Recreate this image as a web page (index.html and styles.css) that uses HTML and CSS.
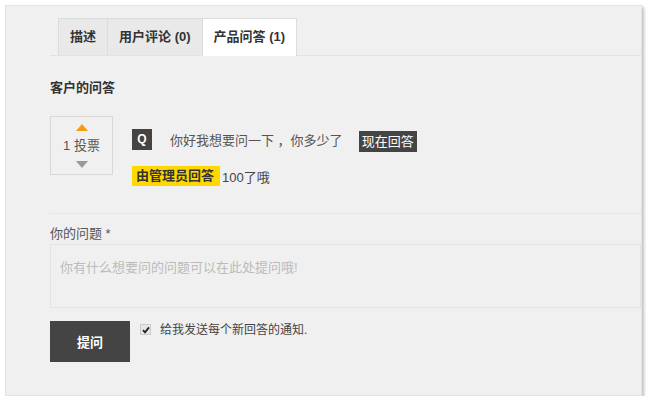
FILE: index.html
```html
<!DOCTYPE html>
<html lang="zh-CN">
<head>
    <meta charset="UTF-8">
    <title>产品问答</title>
    <link rel="stylesheet" href="styles.css">
</head>
<body>
    <div class="panel">
        <ul class="tabs">
            <li class="tab">描述</li>
            <li class="tab">用户评论 (0)</li>
            <li class="tab active">产品问答 (1)</li>
        </ul>

        <h3 class="section-title">客户的问答</h3>

        <div class="qa-item">
            <div class="vote-box">
                <span class="arrow-up"></span>
                <span class="vote-count">1 投票</span>
                <span class="arrow-down"></span>
            </div>
            <div class="qa-body">
                <div class="question-row">
                    <span class="q-badge">Q</span>
                    <span class="question-text">你好我想要问一下 ，你多少了</span>
                    <span class="answer-now">现在回答</span>
                </div>
                <div class="answer-row">
                    <span class="admin-tag">由管理员回答</span>
                    <span class="answer-text">100了哦</span>
                </div>
            </div>
        </div>

        <form class="ask-form">
            <label class="field-label" for="question">你的问题 *</label>
            <textarea id="question" class="question-input" placeholder="你有什么想要问的问题可以在此处提问哦!"></textarea>
            <div class="form-actions">
                <button type="button" class="submit-btn">提问</button>
                <label class="notify">
                    <span class="check-box">
                        <svg width="8" height="8" viewBox="0 0 8 8"><path d="M1 4.2 L3 6.3 L7 1.4" fill="none" stroke="#222" stroke-width="1.8"/></svg>
                    </span>
                    给我发送每个新回答的通知.
                </label>
            </div>
        </form>
    </div>
</body>
</html>
```

FILE: styles.css
```css
body {
    margin: 0;
    background: #fff;
    font-family: "Liberation Sans", "Noto Sans CJK SC", sans-serif;
    font-size: 13px;
    color: #444;
}
.panel {
    margin: 5px 8px 0 5px;
    height: 391px;
    box-sizing: border-box;
    background: #f0f0f0;
    border: 1px solid #e4e4e4;
    box-shadow: 2px 2px 3px rgba(0,0,0,0.25);
    padding: 12px 0 0 44px;
}
.tabs {
    display: flex;
    list-style: none;
    margin: 0;
    padding: 0 0 0 8px;
    border-bottom: 1px solid #e2e2e2;
}
.tab {
    height: 36px;
    line-height: 36px;
    padding: 0 11px;
    background: #e9e9e9;
    border: 1px solid #dcdcdc;
    border-bottom: none;
    margin-right: -1px;
    font-weight: bold;
    color: #333;
}
.tab.active {
    background: #fff;
    margin-bottom: -1px;
    height: 37px;
}
.section-title {
    margin: 23px 0 0;
    font-size: 13px;
    line-height: 18px;
    color: #333;
}
.qa-item {
    display: flex;
    margin-top: 19px;
}
.vote-box {
    width: 61px;
    height: 57px;
    border: 1px solid #d8d8d8;
    display: flex;
    flex-direction: column;
    align-items: center;
    justify-content: center;
}
.arrow-up {
    width: 0;
    height: 0;
    border-left: 6px solid transparent;
    border-right: 6px solid transparent;
    border-bottom: 7px solid #f39c12;
}
.arrow-down {
    width: 0;
    height: 0;
    border-left: 6px solid transparent;
    border-right: 6px solid transparent;
    border-top: 7px solid #999;
}
.vote-count {
    line-height: 18px;
    margin: 6px 0;
    color: #555;
}
.qa-body {
    margin-left: 19px;
    padding-top: 11px;
}
.question-row {
    display: flex;
    align-items: center;
}
.q-badge {
    width: 20px;
    height: 21px;
    line-height: 21px;
    text-align: center;
    background: #444;
    color: #fff;
    font-weight: bold;
    font-size: 12px;
}
.question-text {
    margin-left: 18px;
    color: #555;
}
.answer-now {
    margin-left: 16px;
    margin-top: 4px;
    padding: 0 3px;
    line-height: 21px;
    background: #444;
    color: #fff;
    font-size: 13px;
}
.answer-row {
    display: flex;
    align-items: center;
    margin-top: 14px;
}
.admin-tag {
    background: #ffd800;
    color: #333;
    font-weight: bold;
    line-height: 20px;
    padding: 0 6px 0 4px;
}
.answer-text {
    margin-left: 2px;
    color: #444;
}
.ask-form {
    margin-top: 27px;
    border-top: 1px solid #e6e6e6;
    padding-top: 11px;
}
.field-label {
    display: block;
    line-height: 18px;
    color: #555;
}
.question-input {
    display: block;
    width: 100%;
    height: 64px;
    box-sizing: border-box;
    margin-top: 1px;
    padding: 12px 9px;
    border: 1px solid #e4e4e4;
    background: #f0f0f0;
    font-family: inherit;
    font-size: 13px;
    resize: none;
}
.question-input::placeholder {
    color: #bbb;
}
.form-actions {
    display: flex;
    align-items: flex-start;
    margin-top: 13px;
}
.submit-btn {
    width: 80px;
    height: 41px;
    background: #444;
    color: #fff;
    border: none;
    font-family: inherit;
    font-size: 13px;
    font-weight: bold;
}
.notify {
    display: flex;
    align-items: flex-start;
    margin-left: 10px;
    font-size: 12px;
    line-height: 18px;
    color: #444;
}
.check-box {
    width: 9px;
    height: 9px;
    margin: 3px 9px 0 0;
    border: 1px solid #ccc;
    background: #e6e6e6;
    display: flex;
    align-items: center;
    justify-content: center;
}
```
